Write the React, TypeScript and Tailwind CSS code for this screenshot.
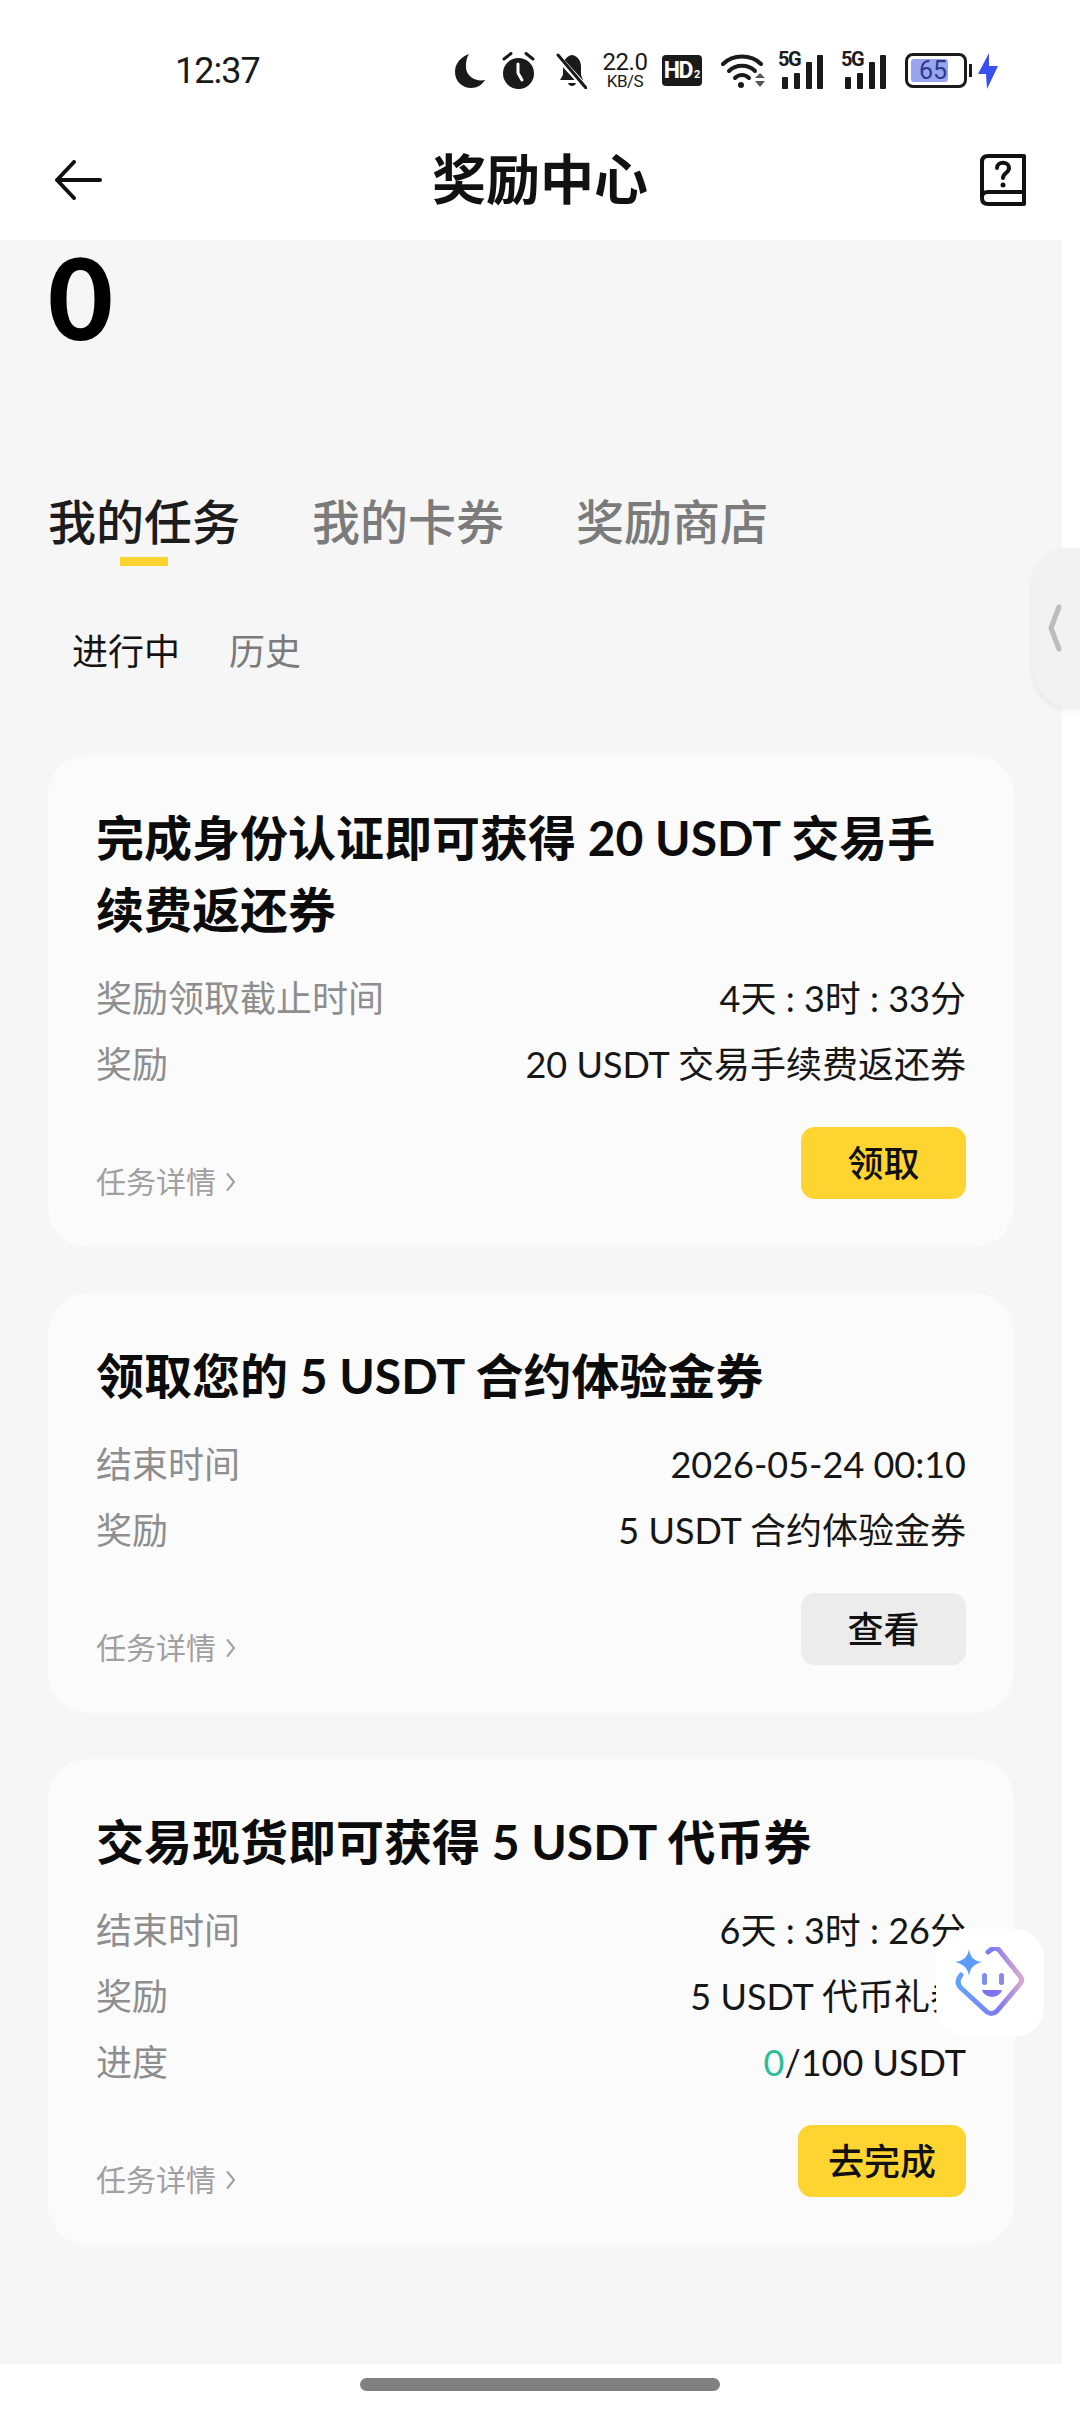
const FONT = "font-['Lato','Noto_Sans_CJK_SC',sans-serif]";

function SignalIcon() {
  return (
    <div className="relative w-[46px] h-[36px]">
      <span className="absolute left-[-1px] top-[-4px] text-[20px] leading-[20px] font-bold tracking-[-1.500px] text-[#1a1a1a] font-['Roboto',sans-serif]">5G</span>
      <svg className="absolute inset-0" width="46" height="36" viewBox="0 0 46 36" fill="#1a1a1a">
        <rect x="3" y="24" width="6" height="12" rx="1" />
        <rect x="15" y="20" width="6" height="16" rx="1" />
        <rect x="27" y="9" width="6" height="27" rx="1" />
        <rect x="38" y="2" width="6" height="34" rx="1" />
      </svg>
    </div>
  );
}

function StatusBar() {
  return (
    <div className="h-[120px] flex items-center pt-[21px] bg-white">
      <div className="w-[455px] pl-[175px] text-[36px] leading-[40px] text-[#1a1a1a] tracking-[-1px] font-['Roboto',sans-serif]">12:37</div>
      <div className="flex items-center">
        {/* moon */}
        <svg width="30" height="36" viewBox="0 0 30 36" fill="#1a1a1a">
          <path d="M14 1 C6 4 0 10 0 19 C0 29 8 35 16 35 C22 35 27 32 30 27 C21 29 12 24 11 15 C10.500 9 12 4 14 1 Z" />
        </svg>
        {/* alarm */}
        <svg className="ml-[17px]" width="33" height="38" viewBox="0 0 33 38" fill="none">
          <circle cx="16.500" cy="21.500" r="15.500" fill="#1a1a1a" />
          <path d="M16 12 V21 L20 28" stroke="#fff" strokeWidth="3" strokeLinecap="round" strokeLinejoin="round" />
          <path d="M2 7 L9 1.500 M31 7 L24 1.500" stroke="#1a1a1a" strokeWidth="3" strokeLinecap="round" />
        </svg>
        {/* muted bell */}
        <svg className="ml-[21px]" width="31" height="36" viewBox="0 0 31 36" fill="none">
          <path d="M16 2 C10 3 7 8 7 14 V22 L4 27 H27 L25 22 V14 C25 8 22 3 16 2 Z" fill="#1a1a1a" />
          <path d="M12 30 H20 C19 34 13 34 12 30 Z" fill="#1a1a1a" />
          <path d="M0 2 L30 35" stroke="#fff" strokeWidth="6" />
          <path d="M2 2 L30 35" stroke="#1a1a1a" strokeWidth="3" strokeLinecap="round" />
        </svg>
        <div className="ml-[13px] w-[50px] flex flex-col items-center text-[#1a1a1a] font-['Roboto',sans-serif]">
          <span className="text-[24px] leading-[22px] tracking-[-0.500px]">22.0</span>
          <span className="text-[17px] leading-[17px] tracking-[-0.500px]">KB/S</span>
        </div>
        <div className="ml-[12px] w-[40px] h-[31px] rounded-[4px] bg-[#1a1a1a] text-white flex items-center justify-center font-['Roboto',sans-serif] font-bold">
          <span className="text-[23px] leading-[20px] tracking-[-1.500px]">HD</span>
          <span className="text-[11px] leading-[12px] ml-[2px] mt-[8px]">2</span>
        </div>
        {/* wifi */}
        <svg className="ml-[19px]" width="44" height="36" viewBox="0 0 44 36" fill="none">
          <path d="M2 11 C12 1 30 1 40 11" stroke="#1a1a1a" strokeWidth="4" strokeLinecap="round" />
          <path d="M8 18 C15 11 27 11 34 18" stroke="#1a1a1a" strokeWidth="4" strokeLinecap="round" />
          <path d="M14 25 C18 21 24 21 28 25" stroke="#1a1a1a" strokeWidth="4" strokeLinecap="round" />
          <circle cx="20" cy="32" r="3" fill="#1a1a1a" />
          <path d="M34 25 H44 L39 20 Z M34 28 H44 L39 34 Z" fill="#555" />
        </svg>
        <div className="ml-[14px]">
          <SignalIcon />
        </div>
        <div className="ml-[17px]">
          <SignalIcon />
        </div>
        {/* battery */}
        <div className="ml-[17px] relative w-[62px] h-[35px] rounded-[8px] border-[3px] border-[#1a1a1a] p-[3px]">
          <div className="h-full w-[37px] rounded-[3px] bg-[#98a5f0]" />
          <span className="absolute inset-0 flex items-center justify-center pr-[6px] text-[25px] leading-none text-[#2c3a8c] font-['Roboto',sans-serif]">65</span>
        </div>
        <div className="ml-[2px] w-[3px] h-[13px] bg-[#1a1a1a]" />
        {/* charging bolt */}
        <svg className="ml-[6px]" width="20" height="36" viewBox="0 0 20 36" fill="#3a4ff0">
          <path d="M11 0 L0 21 H8 L9 36 L20 13 H11 Z" />
        </svg>
      </div>
    </div>
  );
}

function Header() {
  return (
    <div className="h-[120px] bg-white flex items-center justify-between pl-[54px] pr-[54px] pb-[1px]">
      <svg width="48" height="40" viewBox="0 0 48 40" fill="none">
        <path d="M46 20 H3 M20 2 L3 20 L20 38" stroke="#111" strokeWidth="4" strokeLinecap="round" strokeLinejoin="round" />
      </svg>
      <h1 className="text-[54px] leading-[72px] font-bold text-[#111] ml-[-2px]">奖励中心</h1>
      <svg width="46" height="52" viewBox="0 0 46 52" fill="none">
        <path d="M44 2 H8 C4 2 2 4 2 8 V44 C2 48 4 50 8 50 H44 V2 Z" stroke="#111" strokeWidth="4" strokeLinejoin="round" />
        <path d="M2 43 C2 39 5 38 8 38 H44" stroke="#111" strokeWidth="4" />
        <path d="M17 14 C17 7 29 7 29 14 C29 19 23 19 23 24" stroke="#111" strokeWidth="4" strokeLinecap="round" />
        <circle cx="23" cy="31" r="2.500" fill="#111" />
      </svg>
    </div>
  );
}

type Row = { label: string; value: React.ReactNode };

function TaskCard({ title, rows, action, primary }: { title: string; rows: Row[]; action: string; primary: boolean }) {
  return (
    <div className="bg-[#fbfbfb] rounded-[40px] pt-[47px] pb-[48px] pl-[48px] pr-[48px]">
      <h2 className="text-[48px] leading-[72px] font-bold text-[#0c0c0c]">{title}</h2>
      <div className="mt-[19px]">
        {rows.map((row) => (
          <div key={row.label} className="flex justify-between h-[66px] items-center text-[36px]">
            <span className="text-[#8e8e8e]">{row.label}</span>
            <span className="text-[#161616]">{row.value}</span>
          </div>
        ))}
      </div>
      <div className="mt-[30px] flex justify-between items-end">
        <div className="flex items-center text-[30px] leading-[36px] text-[#a0a0a0]">
          任务详情
          <svg className="ml-[10px] mt-[2px]" width="10" height="20" viewBox="0 0 10 20" fill="none">
            <path d="M1.500 2 L8 10 L1.500 18" stroke="#a0a0a0" strokeWidth="2" strokeLinecap="round" strokeLinejoin="round" />
          </svg>
        </div>
        <button className={`min-w-[165px] h-[72px] px-[30px] rounded-[14px] text-[36px] font-medium text-[#111] ${primary ? 'bg-[#fdd430]' : 'bg-[#ececec]'}`}>
          {action}
        </button>
      </div>
    </div>
  );
}

export default function App() {
  return (
    <div className={`relative w-[1080px] h-[2412px] overflow-hidden bg-white flex flex-col ${FONT}`}>
      <StatusBar />
      <Header />

      <main className="w-[1062px] h-[2124px] overflow-hidden bg-[#f6f6f6] pl-[48px] pr-[48px]">
        <div className="text-[112px] leading-[90px] font-black text-black mt-[12px]">0</div>

        {/* tabs */}
        <div className="mt-[150px] flex gap-[72px] text-[48px] leading-[60px]">
          <div className="relative text-[#1c1c1c] font-medium">
            我的任务
            <div className="absolute left-[72px] top-[65px] w-[48px] h-[9px] bg-[#fdd430]" />
          </div>
          <div className="text-[#7b7b7b] font-medium">我的卡券</div>
          <div className="text-[#7b7b7b] font-medium">奖励商店</div>
        </div>

        <div className="mt-[74px] pl-[24px] flex gap-[49px] text-[36px] leading-[50px]">
          <span className="text-[#141414]">进行中</span>
          <span className="text-[#7b7b7b]">历史</span>
        </div>

        <div className="mt-[79px] w-[966px] flex flex-col gap-[46px]">
          <TaskCard
            title="完成身份认证即可获得 20 USDT 交易手续费返还券"
            rows={[
              { label: '奖励领取截止时间', value: '4天 : 3时 : 33分' },
              { label: '奖励', value: '20 USDT 交易手续费返还券' },
            ]}
            action="领取"
            primary
          />
          <TaskCard
            title="领取您的 5 USDT 合约体验金券"
            rows={[
              { label: '结束时间', value: '2026-05-24 00:10' },
              { label: '奖励', value: '5 USDT 合约体验金券' },
            ]}
            action="查看"
            primary={false}
          />
          <TaskCard
            title="交易现货即可获得 5 USDT 代币券"
            rows={[
              { label: '结束时间', value: '6天 : 3时 : 26分' },
              { label: '奖励', value: '5 USDT 代币礼券' },
              { label: '进度', value: <><span className="text-[#2dbd96]">0</span>/100 USDT</> },
            ]}
            action="去完成"
            primary
          />
        </div>
      </main>

      {/* home indicator */}
      <div className="flex-1 flex justify-center pt-[14px] bg-white">
        <div className="w-[360px] h-[13px] rounded-full bg-[#808080]" />
      </div>

      {/* side drawer handle */}
      <div className="absolute right-0 top-[548px] w-[47px] h-[160px] rounded-l-[38px] bg-[#f2f2f2] shadow-[0_2px_6px_rgba(0,0,0,0.08)] flex items-center pl-[15px]">
        <svg width="14" height="48" viewBox="0 0 14 48" fill="none">
          <path d="M11 3 L3 24 L11 45" stroke="#bcbcbc" strokeWidth="5" strokeLinecap="round" strokeLinejoin="round" />
        </svg>
      </div>

      {/* floating assistant */}
      <div className="absolute left-[936px] top-[1929px] w-[108px] h-[108px] rounded-[30px] bg-white flex items-center justify-center">
        <svg width="72" height="72" viewBox="0 0 72 72" fill="none">
          <defs>
            <linearGradient id="assistant" x1="0" y1="0.600" x2="1" y2="0.500">
              <stop offset="0" stopColor="#62a4fb" />
              <stop offset="0.600" stopColor="#7f7bee" />
              <stop offset="1" stopColor="#d9a8cf" />
            </linearGradient>
          </defs>
          <path d="M34 5 L38 2 C40 1 43 1 45 3 L66 29 C68 32 68 35 66 37 L43 64 C40 67 36 67 33 65 L7 41 C3 37 3 33 7 28" stroke="url(#assistant)" strokeWidth="5" strokeLinecap="round" strokeLinejoin="round" />
          <path d="M15 2 C16 10 20 14 28 15 C20 17 16 21 15 29 C14 21 9 17 1 15 C9 14 14 10 15 2 Z" fill="#5b9bfa" />
          <rect x="28" y="26" width="5" height="12" rx="2.500" fill="#7d8eee" />
          <rect x="45" y="26" width="5" height="12" rx="2.500" fill="#8d86ea" />
          <path d="M28 43 H48 C46 52 30 52 28 43 Z" fill="#7b74ee" />
        </svg>
      </div>
    </div>
  );
}
